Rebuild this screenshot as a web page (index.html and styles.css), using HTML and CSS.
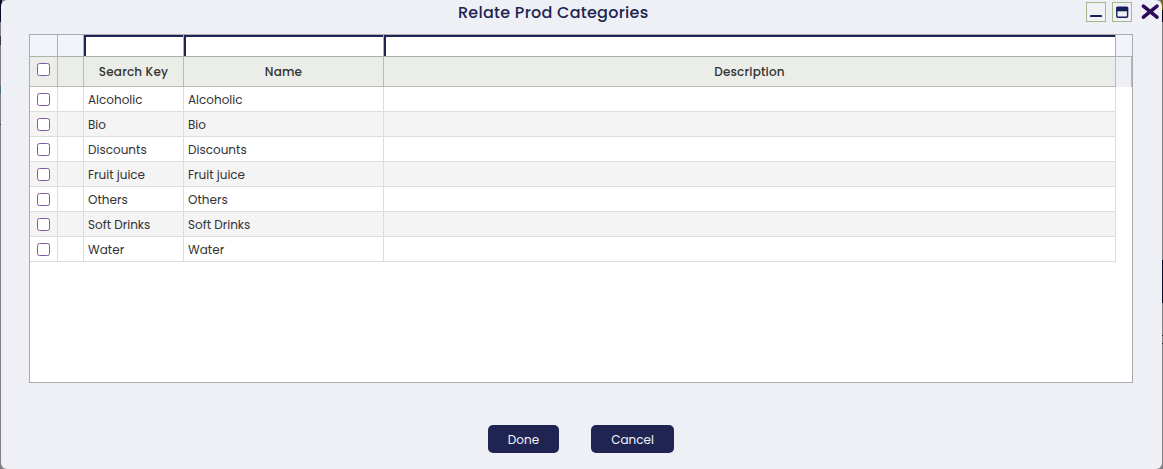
FILE: index.html
```html
<!DOCTYPE html>
<html lang="en">
<head>
<meta charset="utf-8">
<title>Relate Prod Categories</title>
<link rel="stylesheet" href="styles.css">
</head>
<body>
<main class="dialog">
<header class="titlebar">
<h1 class="title">Relate Prod Categories</h1>
<div class="controls">
<button class="control" aria-label="Minimize"><svg width="18" height="18" viewBox="0 0 18 18"><rect x="3" y="12" width="12" height="2" rx=".6" fill="#14205a"/></svg></button>
<button class="control" aria-label="Maximize"><svg width="18" height="18" viewBox="0 0 18 18"><rect x="3.8" y="4.2" width="10.8" height="10" rx="1" fill="none" stroke="#14205a" stroke-width="1.4"/><path d="M3.3 4h11.8v4.3h-11.8z" fill="#14205a"/></svg></button>
<button class="close" aria-label="Close"><svg width="20" height="18" viewBox="0 0 20 18"><path d="M3.4 3.2L17 14.2M17 3.2L3.4 14.2" stroke="#2b0b57" stroke-width="3.6" stroke-linecap="round"/></svg></button>
</div>
</header>
<section class="grid">
<div class="row filters"><span></span><span></span><span class="filter"></span><span class="filter"></span><span class="filter"></span><span class="spare"></span></div>
<div class="row head"><span class="pick"><i class="check"></i></span><span></span><span><b>Search Key</b></span><span><b>Name</b></span><span><b>Description</b></span><span class="spare"></span></div>
<div class="row"><span class="pick"><i class="check"></i></span><span></span><span class="text">Alcoholic</span><span class="text">Alcoholic</span><span></span></div>
<div class="row alt"><span class="pick"><i class="check"></i></span><span></span><span class="text">Bio</span><span class="text">Bio</span><span></span></div>
<div class="row"><span class="pick"><i class="check"></i></span><span></span><span class="text">Discounts</span><span class="text">Discounts</span><span></span></div>
<div class="row alt"><span class="pick"><i class="check"></i></span><span></span><span class="text">Fruit juice</span><span class="text">Fruit juice</span><span></span></div>
<div class="row"><span class="pick"><i class="check"></i></span><span></span><span class="text">Others</span><span class="text">Others</span><span></span></div>
<div class="row alt"><span class="pick"><i class="check"></i></span><span></span><span class="text">Soft Drinks</span><span class="text">Soft Drinks</span><span></span></div>
<div class="row"><span class="pick"><i class="check"></i></span><span></span><span class="text">Water</span><span class="text">Water</span><span></span></div>
</section>
<footer class="actions"><button class="action done">Done</button><button class="action cancel">Cancel</button></footer>
</main>
</body>
</html>
```
FILE: styles.css
```css
* { box-sizing: border-box; }
body {
  margin: 0;
  height: 469px;
  overflow: hidden;
  padding: 0 1px;
  font-family: Poppins, Inter, "Open Sans", sans-serif;
  background:
    linear-gradient(#0b0b2c 0 22px, #808084 22px 36px, #38383c 36px 45px, #808084 45px 86px, #47747e 86px 94px, #808084 94px 124px, #38383c 124px 125px, #808084 125px) left / 2px 100% no-repeat,
    linear-gradient(#77600c 0 10px, #05051c 10px 22px, #808084 22px 260px, #0d0b2c 260px 303px, #808084 303px 335px, #1b1b1b 335px 336px, #808084 336px 343px, #1b1b1b 343px 344px, #808084 344px) right / 2px 100% no-repeat,
    #808084;
}
button { margin: 0; padding: 0; font-family: inherit; }
.dialog { height: 469px; border-radius: 6px; background: #eff0f6; }
.titlebar {
  height: 34px;
  display: flex;
  align-items: flex-start;
  justify-content: space-between;
  padding-left: 457px;
}
.title {
  margin: 0;
  white-space: nowrap;
  color: #202452;
  font-size: 16px;
  line-height: 26px;
  font-weight: 500;
  letter-spacing: .26px;
}
.controls { display: flex; padding-top: 2px; }
.control {
  width: 20px;
  height: 20px;
  margin-right: 6px;
  border: 1px solid #a5b98c;
  background: #f0f1f4;
}
.close { width: 20px; height: 20px; margin-right: 2px; border: 0; background: none; }
.control + .close { margin-left: 2px; }
.controls svg { display: block; }
.grid {
  width: 1104px;
  height: 349px;
  margin-left: 28px;
  border: 1px solid #a9abae;
  background: #fff;
}
.row {
  display: grid;
  grid-template-columns: 28px 26px 100px 200px 732px 16px;
  grid-template-rows: 100%;
  height: 25px;
  color: #333;
  font-size: 12px;
}
.row > span { border: solid #ddd; border-width: 0 1px 1px 0; }
.alt > span { background: #f4f4f4; }
.filters { height: 22px; }
.filters > span { border-color: #aeb0ad; background: #f1f5fb; }
.filters > .filter {
  background: #fff;
  box-shadow: inset 2px 2px #202452;
}
.row.filters > .spare { border-right: 0; }
.head { height: 30px; }
.head > span {
  border-color: #b8bab3;
  background: #ebeee8;
  text-align: center;
  line-height: 30px;
}
.row.head > .spare { border-bottom: 0; background: #eff0f6; }
.head b { font-weight: 500; letter-spacing: .18px; }
.pick { display: flex; justify-content: center; align-items: flex-start; padding-top: 6px; }
.check {
  width: 13px;
  height: 13px;
  border: 1px solid #805ba5;
  border-radius: 2.5px;
  background: #fff;
}
.text { padding-left: 4px; line-height: 26px; }
.actions { display: flex; margin-top: 42px; margin-left: 487px; gap: 32px; }
.action {
  height: 28px;
  padding-top: 1px;
  border: 0;
  border-radius: 5px;
  background: #202452;
  color: #f4f4fa;
  font-size: 12px;
  line-height: 27px;
}
.done { width: 71px; }
.cancel { width: 83px; }
```
